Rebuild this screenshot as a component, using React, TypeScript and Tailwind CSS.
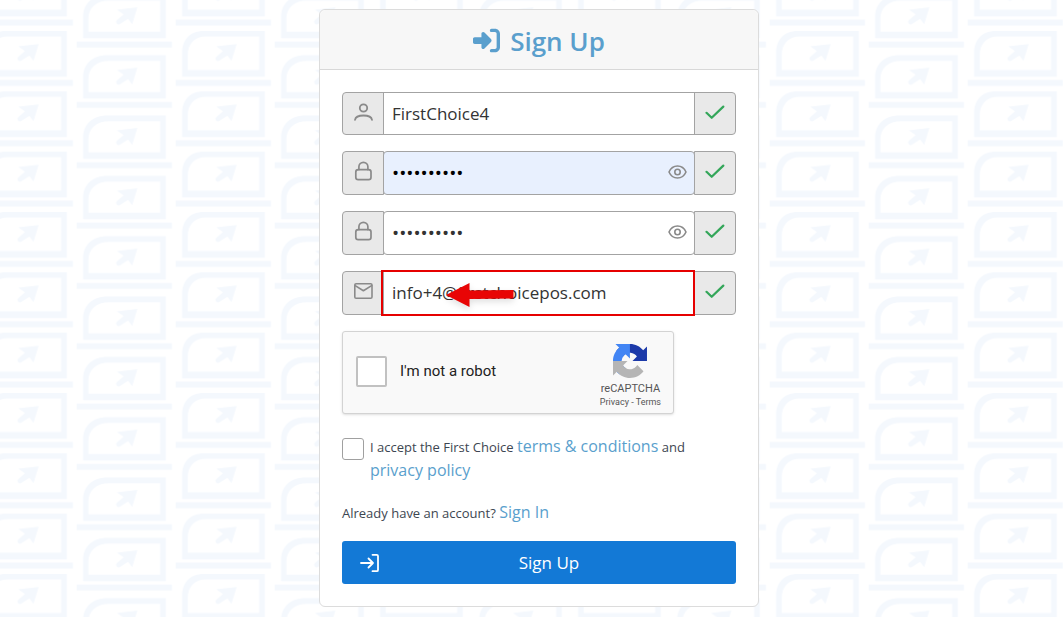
import type { ReactNode } from "react";
import { FaRightToBracket } from "react-icons/fa6";

const stroke = {
  fill: "none",
  stroke: "currentColor",
  strokeLinecap: "round" as const,
  strokeLinejoin: "round" as const,
};

function UserIcon() {
  return (
    <svg width="20" height="20" viewBox="0 0 20 20" strokeWidth="1.8" {...stroke}>
      <circle cx="10.500" cy="6" r="3.700" />
      <path d="M2 17.800c.5-3 4-4.300 8.500-4.300s8 1.300 8.500 4.300" />
    </svg>
  );
}

function LockIcon() {
  return (
    <svg width="20" height="20" viewBox="0 0 20 20" strokeWidth="1.700" {...stroke}>
      <rect x="2.800" y="8.600" width="15.200" height="10" rx="2.400" />
      <path d="M5.900 8.600V5.800a4.500 4.500 0 0 1 9 0v2.800" />
    </svg>
  );
}

function MailIcon() {
  return (
    <svg width="20" height="20" viewBox="0 0 20 20" strokeWidth="1.600" {...stroke}>
      <rect x="1.800" y="2.700" width="17.200" height="14.600" rx="1.300" />
      <path d="M2.200 4.600 10.400 9.800l8.200-5.200" />
    </svg>
  );
}

function EyeIcon() {
  return (
    <svg width="20" height="20" viewBox="0 0 20 20" strokeWidth="1.600" {...stroke}>
      <path d="M2 10C3.700 6.200 6.800 4 10.500 4s6.800 2.200 8.500 6c-1.700 3.800-4.800 6-8.500 6S3.700 13.800 2 10Z" />
      <circle cx="10.500" cy="10" r="2.700" />
    </svg>
  );
}

function CheckIcon() {
  return (
    <svg width="20" height="20" viewBox="0 0 20 20" strokeWidth="2.200" {...stroke}>
      <path d="m1.500 10.800 5.200 5L18.300 4.600" />
    </svg>
  );
}

function LoginIcon() {
  return (
    <svg width="20" height="20" viewBox="0 0 20 20" strokeWidth="1.800" {...stroke}>
      <path d="M1 10h12M8.500 5.500 13 10l-4.500 4.500M12.500 1.800h4.200c.8 0 1.300.5 1.300 1.300v13.800c0 .8-.5 1.300-1.300 1.300h-4.200" />
    </svg>
  );
}

function RecaptchaLogo() {
  return (
    <svg width="34" height="34" viewBox="0 0 64 64">
      <path
        fill="#1c3aa9"
        d="M64 31.955l-.033-1.370V4.687l-7.160 7.160C50.948 4.674 42.033.093 32.050.093c-10.400 0-19.622 4.960-25.458 12.640l11.736 11.860a15.550 15.550 0 0 1 4.754-5.334c2.050-1.600 4.952-2.906 8.968-2.906.485 0 .860.057 1.135.163 4.976.393 9.288 3.140 11.828 7.124l-8.307 8.307L64 31.953"
      />
      <path
        fill="#4285f4"
        d="M31.862.094l-1.370.033H4.594l7.160 7.160C4.580 13.147 0 22.060 0 32.046c0 10.400 4.960 19.622 12.640 25.458L24.500 45.768a15.550 15.550 0 0 1-5.334-4.754c-1.600-2.050-2.906-4.952-2.906-8.968 0-.485.057-.860.163-1.135.393-4.976 3.140-9.288 7.124-11.828l8.307 8.307L31.860.095"
      />
      <path
        fill="#b5b5b5"
        d="M.001 32.045l.033 1.370v25.898l7.160-7.160c5.860 7.173 14.774 11.754 24.760 11.754 10.400 0 19.622-4.960 25.458-12.640l-11.736-11.860a15.550 15.550 0 0 1-4.754 5.334c-2.050 1.600-4.952 2.906-8.968 2.906-.485 0-.860-.057-1.135-.163-4.976-.393-9.288-3.140-11.828-7.124l8.307-8.307c-10.522.040-22.400.066-27.295-.005"
      />
    </svg>
  );
}

/* Register screens repeated behind the card */
function BackgroundPattern() {
  return (
    <svg className="absolute inset-0 h-full w-full" aria-hidden="true">
      <defs>
        <g id="screen-arrow">
          <path d="M0 0-20.500 2.300-13.800 7-20.300 12.600a2.300 2.300 0 0 0 3.200 3.900L-9.300 11.500-5.200 17Z" />
        </g>
        <g id="screen-odd">
          <path
            fillRule="evenodd"
            d="M89.200 0v45.700H6.400V22C6.400 8 15 0 28 0ZM83.500 5.500H31C18.500 5.500 12.100 13 12.100 24v15H83.500Z"
          />
          <path d="M0 49h95.300v6H0Z" />
          <use href="#screen-arrow" x="61" y="13" />
        </g>
        <g id="screen-even">
          <path
            fillRule="evenodd"
            d="M89.200 0v43.200H6.400V22C6.400 8 17 0 30 0ZM83.500 5.500H33C19 5.500 11.700 13 11.700 24v12.800H83.500Z"
          />
          <path d="M0 46.700h95.300v6H0Z" />
          <use href="#screen-arrow" x="60.700" y="12.400" />
        </g>
        <pattern
          id="screens"
          x="-22.300"
          y="31"
          width="198"
          height="60.330"
          patternUnits="userSpaceOnUse"
        >
          <g fill="#f4f8fd">
            <use href="#screen-odd" />
            <use href="#screen-even" x="99" y="24.300" />
            <use href="#screen-even" x="99" y="-36.030" />
          </g>
        </pattern>
      </defs>
      <rect width="100%" height="100%" fill="url(#screens)" />
    </svg>
  );
}

type FieldProps = {
  id: string;
  label: string;
  type: string;
  value: string;
  icon: ReactNode;
  rowClass: string;
  inputClass: string;
  children?: ReactNode;
};

function Field({ id, label, type, value, icon, rowClass, inputClass, children }: FieldProps) {
  return (
    <div className={`relative flex ${rowClass}`}>
      <label
        htmlFor={id}
        aria-label={label}
        className="flex w-[42px] shrink-0 items-center justify-center rounded-l border border-[#a3a3a3] bg-[#e9e9e9] pb-1 text-[#8a8a8a]"
      >
        {icon}
      </label>
      <div className="relative -ml-px flex min-w-0 flex-1">
        <input
          id={id}
          type={type}
          aria-label={label}
          defaultValue={value}
          className={`w-full min-w-0 border border-[#a3a3a3] px-2 outline-none ${inputClass}`}
        />
        {type === "password" && (
          <button
            type="button"
            aria-label="Show password"
            className="absolute inset-y-0 right-0 flex w-9 items-center justify-center pb-0.5 text-[#8a8a8a]"
          >
            <EyeIcon />
          </button>
        )}
      </div>
      <span className="-ml-px flex w-[42px] shrink-0 items-center justify-center rounded-r border border-[#a3a3a3] bg-[#e9e9e9] pb-1 text-[#34a65a]">
        <CheckIcon />
      </span>
      {children}
    </div>
  );
}

/* Red marker over the email field */
function Highlight() {
  return (
    <>
      <div className="pointer-events-none absolute -top-px -bottom-px right-[41px] left-[39px] border-2 border-[#e60000]" />
      <svg
        className="pointer-events-none absolute top-2 left-[102px] drop-shadow-md"
        width="72"
        height="32"
        viewBox="0 0 72 32"
        aria-hidden="true"
      >
        <path fill="#e80505" d="M2 16 25.500 4v7.500L69.500 11v8.500l-44 .5v8Z" />
      </svg>
    </>
  );
}

export default function App() {
  return (
    <div className="relative min-h-screen bg-white font-['Open_Sans','Noto_Sans',sans-serif]">
      <BackgroundPattern />
      <main className="relative py-[9px] pl-[15px]">
        <div className="mx-auto max-w-[440px] rounded-md border border-[#dcdcdc] bg-white">
          <header className="flex h-[60px] items-center justify-center gap-2.5 rounded-t-md border-b border-[#d8d8d8] bg-[#f7f7f7] pt-0.5 text-[#5a9fcd]">
            <FaRightToBracket size={27} />
            <h1 className="text-[26px] leading-9 font-semibold">Sign Up</h1>
          </header>

          <form className="px-[22px] pt-[22px] pb-[22px]">
            <div className="flex flex-col gap-4 text-[17px]">
              <Field
                id="username"
                label="Username"
                type="text"
                value="FirstChoice4"
                icon={<UserIcon />}
                rowClass="h-[43px]"
                inputClass="bg-white text-[#333]"
              />
              <Field
                id="password"
                label="Password"
                type="password"
                value="firstpass4"
                icon={<LockIcon />}
                rowClass="h-11"
                inputClass="rounded bg-[#e8f0fe] text-[19px] text-black"
              />
              <Field
                id="confirm"
                label="Confirm password"
                type="password"
                value="firstpass4"
                icon={<LockIcon />}
                rowClass="h-11"
                inputClass="rounded bg-white text-[19px] text-[#333]"
              />
              <Field
                id="email"
                label="Email"
                type="email"
                value="info+4@firstchoicepos.com"
                icon={<MailIcon />}
                rowClass="h-11"
                inputClass="bg-white text-[#333]"
              >
                <Highlight />
              </Field>
            </div>

            <div className="mt-4 flex h-[83px] max-w-[332px] items-center rounded-[3px] border border-[#d3d3d3] bg-[#f9f9f9] pr-3 pb-0.5 pl-[13px] font-[Roboto,sans-serif] shadow-sm">
              <input
                id="robot"
                type="checkbox"
                className="h-[31px] w-[31px] shrink-0 appearance-none rounded-[2px] border-2 border-[#c1c1c1] bg-white"
              />
              <label htmlFor="robot" className="ml-[13px] text-[15px] text-[#222]">
                I'm not a robot
              </label>
              <div className="ml-auto flex flex-col items-center pt-2 text-[#555]">
                <RecaptchaLogo />
                <span className="mt-1 text-[11px] leading-[14px]">reCAPTCHA</span>
                <span className="text-[9px] leading-[12px]">
                  <a href="#privacy">Privacy</a> - <a href="#terms">Terms</a>
                </span>
              </div>
            </div>

            <div className="mt-[21px] flex items-start gap-1.5">
              <input
                id="accept"
                type="checkbox"
                className="mt-[3px] h-[22px] w-[22px] shrink-0 appearance-none rounded-[3px] border border-[#a0a0a0] bg-white"
              />
              <label htmlFor="accept" className="text-[13px] leading-6 text-[#3d4651]">
                I accept the First Choice{" "}
                <a href="#terms" className="text-[16px] leading-none text-[#5a9fcd]">
                  terms &amp; conditions
                </a>{" "}
                and
                <br />
                <a href="#privacy" className="text-[16px] leading-none text-[#5a9fcd]">
                  privacy policy
                </a>
              </label>
            </div>

            <p className="mt-[18px] text-[13px] leading-6 text-[#3d4651]">
              Already have an account?{" "}
              <a href="#signin" className="text-[16px] leading-none text-[#5a9fcd]">
                Sign In
              </a>
            </p>

            <button
              type="submit"
              className="mt-4 flex h-[43px] w-full items-center rounded-[3px] bg-[#1379d6] px-[18px] text-[17px] text-white"
            >
              <LoginIcon />
              <span className="flex-1">Sign Up</span>
            </button>
          </form>
        </div>
      </main>
    </div>
  );
}
